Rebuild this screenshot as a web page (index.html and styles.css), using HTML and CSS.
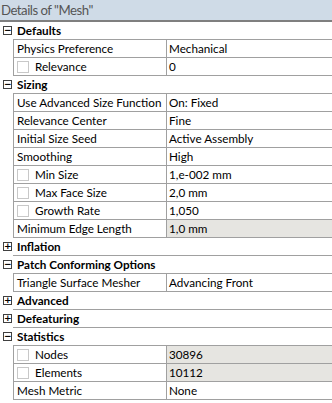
FILE: index.html
```html
<!DOCTYPE html>
<html lang="en">
<head>
<meta charset="UTF-8">
<title>Details of "Mesh"</title>
<link rel="stylesheet" href="styles.css">
</head>
<body>
<div class="panel">
<div class="title">Details of "Mesh"</div>
<div class="tree">

<!-- Defaults -->
<div class="row cat"><span class="gutter"><span class="tog">&minus;</span></span><span class="label">Defaults</span></div>
<div class="row"><span class="gutter"></span><span class="name">Physics Preference</span><span class="val">Mechanical</span></div>
<div class="row"><span class="gutter"></span><span class="name"><span class="chk"></span>Relevance</span><span class="val">0</span></div>

<!-- Sizing -->
<div class="row cat"><span class="gutter"><span class="tog">&minus;</span></span><span class="label">Sizing</span></div>
<div class="row"><span class="gutter"></span><span class="name">Use Advanced Size Function</span><span class="val">On: Fixed</span></div>
<div class="row"><span class="gutter"></span><span class="name">Relevance Center</span><span class="val">Fine</span></div>
<div class="row"><span class="gutter"></span><span class="name">Initial Size Seed</span><span class="val">Active Assembly</span></div>
<div class="row"><span class="gutter"></span><span class="name">Smoothing</span><span class="val">High</span></div>
<div class="row"><span class="gutter"></span><span class="name"><span class="chk"></span>Min Size</span><span class="val">1,e-002 mm</span></div>
<div class="row"><span class="gutter"></span><span class="name"><span class="chk"></span>Max Face Size</span><span class="val">2,0 mm</span></div>
<div class="row"><span class="gutter"></span><span class="name"><span class="chk"></span>Growth Rate</span><span class="val">1,050</span></div>
<div class="row"><span class="gutter"></span><span class="name">Minimum Edge Length</span><span class="val ro">1,0 mm</span></div>

<div class="row cat"><span class="gutter"><span class="tog">+</span></span><span class="label">Inflation</span></div>

<div class="row cat"><span class="gutter"><span class="tog">&minus;</span></span><span class="label">Patch Conforming Options</span></div>
<div class="row"><span class="gutter"></span><span class="name">Triangle Surface Mesher</span><span class="val">Advancing Front</span></div>

<div class="row cat"><span class="gutter"><span class="tog">+</span></span><span class="label">Advanced</span></div>
<div class="row cat"><span class="gutter"><span class="tog">+</span></span><span class="label">Defeaturing</span></div>

<!-- Statistics -->
<div class="row cat"><span class="gutter"><span class="tog">&minus;</span></span><span class="label">Statistics</span></div>
<div class="row"><span class="gutter"></span><span class="name"><span class="chk"></span>Nodes</span><span class="val ro">30896</span></div>
<div class="row"><span class="gutter"></span><span class="name"><span class="chk"></span>Elements</span><span class="val ro">10112</span></div>
<div class="row"><span class="gutter"></span><span class="name">Mesh Metric</span><span class="val">None</span></div>

</div>
</div>
</body>
</html>
```

FILE: styles.css
```css
body { margin:0; background:#fff; font-family:Lato, "Open Sans", sans-serif; font-size:11.7px; color:#000; }
.panel { width:332px; }
.title { height:20px; line-height:20px; padding-left:1px; background:#cfdbe7; color:#555; font-size:13.2px; letter-spacing:-0.5px; border-bottom:2px solid #7f7f7f; }
.row { display:flex; height:18px; line-height:17px; }
.gutter { width:13px; flex:none; position:relative; }
.tog { position:absolute; left:3px; top:4px; width:7px; height:7px; border:1px solid #404040; background:#fff; font-size:9px; line-height:7px; text-align:center; font-weight:bold; font-family:"DejaVu Sans", sans-serif; }
.label { flex:1; font-weight:bold; padding-left:4px; border-bottom:1px solid #a0a0a0; }
.name { width:149px; flex:none; padding-left:3px; border-left:1px solid #a0a0a0; border-right:1px solid #a0a0a0; border-bottom:1px solid #a0a0a0; display:flex; align-items:center; white-space:nowrap; overflow:hidden; }
.val { flex:1; padding-left:2px; border-bottom:1px solid #a0a0a0; white-space:nowrap; }
.val.ro { background:#e6e5e1; }
.chk { width:10px; height:10px; border:1px solid #c8c8c8; margin-right:6px; flex:none; }
```
